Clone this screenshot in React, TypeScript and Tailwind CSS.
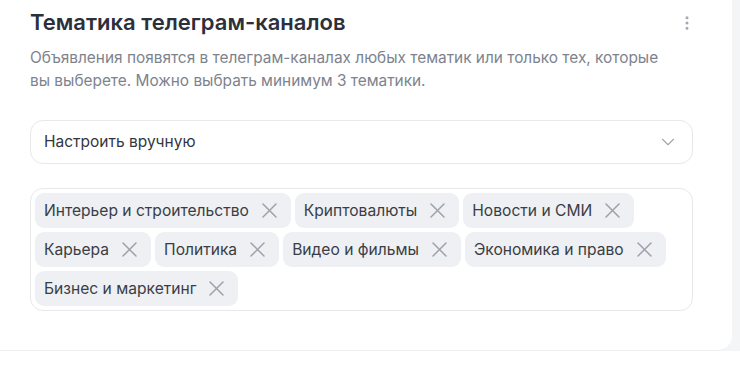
import { ChevronDown, EllipsisVertical } from "lucide-react";

const topics = [
  "Интерьер и строительство",
  "Криптовалюты",
  "Новости и СМИ",
  "Карьера",
  "Политика",
  "Видео и фильмы",
  "Экономика и право",
  "Бизнес и маркетинг",
];

function Cross() {
  return (
    <svg width="15" height="15" viewBox="0 0 15 15" fill="none" className="shrink-0">
      <path d="M1 1L14 14M14 1L1 14" stroke="#9ca1ab" strokeWidth="1.5" strokeLinecap="round" />
    </svg>
  );
}

function Chip({ label }: { label: string }) {
  return (
    <span className="flex h-[35px] items-center gap-[13px] rounded-[9px] bg-[#eef0f4] pl-[9px] pr-[14px] text-[15.6px] text-[#3a3d44]">
      {label}
      <Cross />
    </span>
  );
}

export default function App() {
  return (
    <div className="min-h-screen bg-white font-['Inter','Noto_Sans',sans-serif]">
      <div className="w-[740px] bg-[#f4f5f7]">
        <div className="w-[732px] rounded-br-[14px] border-b border-[#eceef1] bg-white pb-[39px] pl-[30px] pr-[39px] pt-[6px]">
          <div className="flex items-start justify-between">
            <h1 className="text-[22px] font-semibold leading-[32px] text-[#2b303b]">
              Тематика телеграм-каналов
            </h1>
            <EllipsisVertical size={18} className="mr-[-3px] mt-[8px] text-[#a3a8b1]" />
          </div>
          <p className="mt-[8px] text-[15.4px] leading-[23px] text-[#7d838d]">
            Объявления появятся в телеграм-каналах любых тематик или только тех, которые
            <br />
            вы выберете. Можно выбрать минимум 3 тематики.
          </p>

          <button className="mt-[28px] flex h-[44px] w-full items-center justify-between rounded-[13px] border border-[#e6e8ec] pl-[13px] pr-[13px] text-[15.5px] text-[#33363d]">
            Настроить вручную
            <ChevronDown size={22} strokeWidth={1.2} className="text-[#a0a5ae]" />
          </button>

          <div className="mt-[24px] flex flex-wrap gap-[4px] rounded-[13px] border border-[#e6e8ec] p-[4px] pr-[20px]">
            {topics.map((t) => (
              <Chip key={t} label={t} />
            ))}
          </div>
        </div>
      </div>
    </div>
  );
}
